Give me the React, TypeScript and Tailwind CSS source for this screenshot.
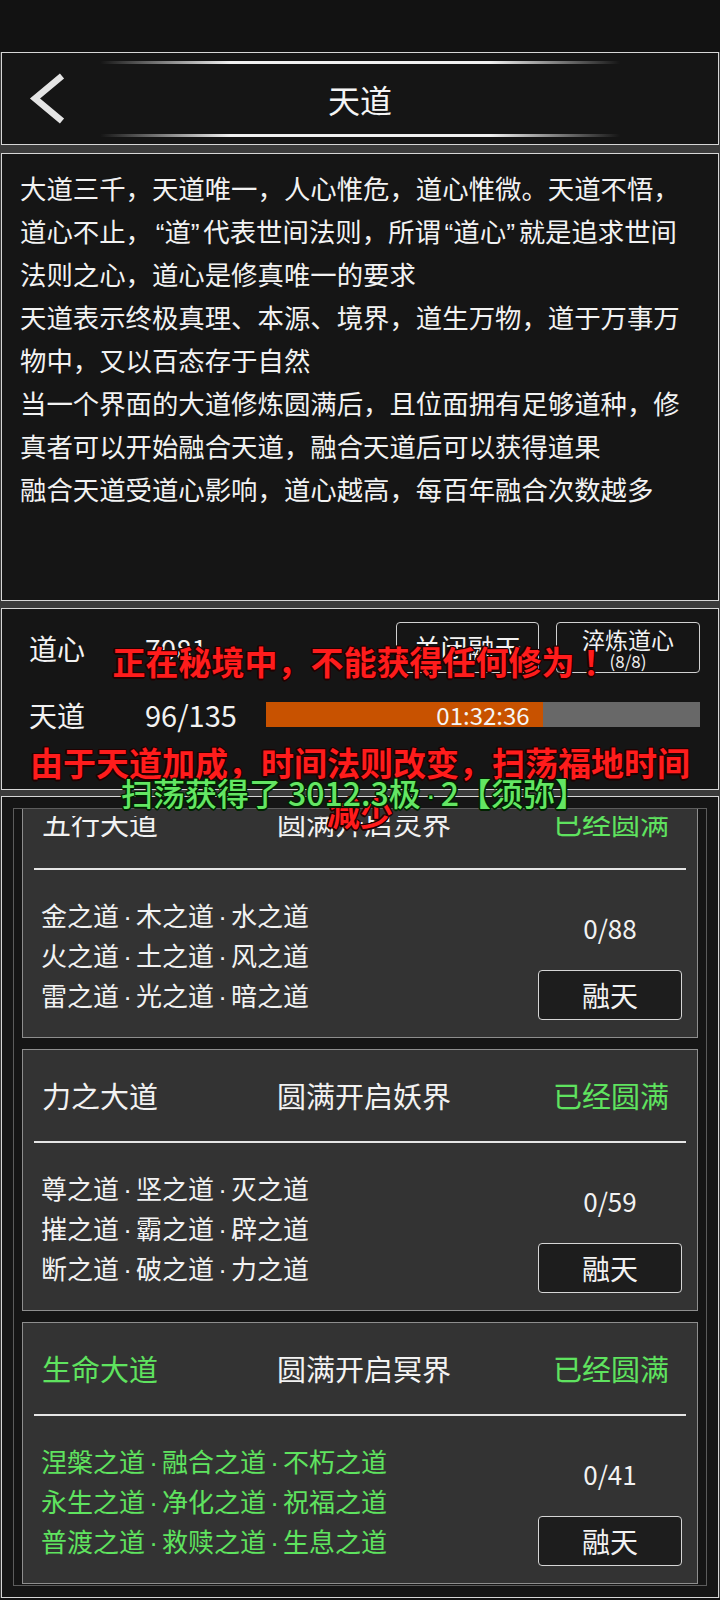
import React from "react";

type CardProps = {
  title: string;
  realm: string;
  lines: string[][];
  count: string;
  green?: boolean;
};

function Dot() {
  return <span className="inline-block w-[17px] text-center font-['Liberation_Sans',sans-serif]">·</span>;
}

function OpenQ() {
  return <span className="inline-block w-[12.5px] text-right font-['Liberation_Sans',sans-serif]">“</span>;
}
function CloseQ() {
  return <span className="inline-block w-[12.5px] text-left font-['Liberation_Sans',sans-serif]">”</span>;
}

function Card({ title, realm, lines, count, green }: CardProps) {
  return (
    <div className="h-[262px] shrink-0 border border-[#8e8e8e] bg-[#333333] flex flex-col">
      <div className="h-[91px] flex items-center text-[29px] leading-none">
        <div className={green ? "w-[254px] pl-[19px] text-[#5fe35f]" : "w-[254px] pl-[19px] text-[#f2f2f2]"}>{title}</div>
        <div className="flex-1 text-[#f2f2f2]">{realm}</div>
        <div className="pr-[28px] text-[#5fe35f]">已经圆满</div>
      </div>
      <div className="mx-[11px] h-[2px] bg-[#e6e6e6]" />
      <div className="flex flex-1">
        <div className={green ? "pl-[18px] pt-[25px] text-[26px] leading-[40px] text-[#5fe35f]" : "pl-[18px] pt-[25px] text-[26px] leading-[40px] text-[#f2f2f2]"}>
          {lines.map((l, i) => (
            <div key={i} className="h-[40px] whitespace-nowrap">
              {l.map((w, j) => (
                <React.Fragment key={j}>
                  {j > 0 && <Dot />}
                  {w}
                </React.Fragment>
              ))}
            </div>
          ))}
        </div>
        <div className="ml-auto mr-[15px] w-[144px] flex flex-col items-center">
          <div className="mt-[40px] h-[36px] leading-[36px] text-[26px] text-[#f2f2f2]">{count}</div>
          <div className="mt-[24px] w-[144px] h-[50px] rounded-[4px] border border-[#d6d6d6] bg-[#1d1d1d] flex items-center justify-center text-[28px] text-[#f2f2f2]">
            融天
          </div>
        </div>
      </div>
    </div>
  );
}

const descLine = "h-[43px] whitespace-nowrap";

export default function App() {
  const progress = 63.8;
  return (
    <div className="relative w-[720px] h-[1600px] overflow-hidden bg-[#121212] font-['Noto_Sans_CJK_SC','Noto_Sans',sans-serif] text-[#f2f2f2]">
      <div className="h-[52px]" />
      <div className="bg-[#3b3b3b] px-px">
        {/* Header */}
        <div className="h-[93px] border border-[#d6d6d6] bg-[#151515] flex flex-col">
          <div className="mt-[8px] mx-auto w-[520px] h-[3px] bg-[linear-gradient(to_right,transparent,#f0f0f0_25%,#f0f0f0_75%,transparent)]" />
          <div className="flex-1 grid grid-cols-[1fr_auto_1fr] items-center">
            <div className="pl-[26px] flex items-center">
              <svg width="38" height="54" viewBox="0 0 38 54">
                <path d="M34 4 L7 26.5 L34 49" fill="none" stroke="#e4e4e4" strokeWidth="6.5" strokeLinejoin="miter" />
              </svg>
            </div>
            <div className="text-[32px] leading-none text-[#f5f5f5]">天道</div>
            <div />
          </div>
          <div className="mb-[7px] mx-auto w-[520px] h-[3px] bg-[linear-gradient(to_right,transparent,#f0f0f0_25%,#f0f0f0_75%,transparent)]" />
        </div>

        {/* Description */}
        <div className="mt-[8px] h-[448px] border border-[#d6d6d6] bg-[#151515] pl-[18px] pt-[12px] text-[26.4px] leading-[43px] text-[#f2f2f2]">
          <div className={descLine}>大道三千，天道唯一，人心惟危，道心惟微。天道不悟，</div>
          <div className={descLine}>
            道心不止，<OpenQ />道<CloseQ />代表世间法则，所谓<OpenQ />道心<CloseQ />就是追求世间
          </div>
          <div className={descLine}>法则之心，道心是修真唯一的要求</div>
          <div className={descLine}>天道表示终极真理、本源、境界，道生万物，道于万事万</div>
          <div className={descLine}>物中，又以百态存于自然</div>
          <div className={descLine}>当一个界面的大道修炼圆满后，且位面拥有足够道种，修</div>
          <div className={descLine}>真者可以开始融合天道，融合天道后可以获得道果</div>
          <div className={descLine}>融合天道受道心影响，道心越高，每百年融合次数越多</div>
        </div>

        {/* Stats */}
        <div className="mt-[7px] h-[182px] border border-[#d6d6d6] bg-[#151515] pt-[13px]">
          <div className="flex items-center h-[51px] pl-[27px] pr-[18px]">
            <div className="w-[116px] text-[28px] leading-none">道心</div>
            <div className="flex-1 text-[28px] leading-none">7081</div>
            <div className="w-[143px] h-[51px] rounded-[4px] border border-[#d0d0d0] flex items-center justify-center text-[27px] leading-none">
              关闭融天
            </div>
            <div className="ml-[17px] w-[144px] h-[51px] rounded-[4px] border border-[#d0d0d0] flex flex-col items-center justify-center">
              <div className="text-[23px] leading-[26px]">淬炼道心</div>
              <div className="text-[17px] leading-[18px]">(8/8)</div>
            </div>
          </div>
          <div className="mt-[21px] flex items-center h-[41px] pl-[27px] pr-[18px]">
            <div className="w-[116px] text-[28px] leading-none">天道</div>
            <div className="w-[121px] text-[29px] leading-none">96/135</div>
            <div className="relative flex-1 h-[25px] bg-[#686868]">
              <div className="h-full bg-[#c85200]" style={{ width: `${progress}%` }} />
              <div className="absolute inset-0 flex items-center justify-center text-[24px] leading-none text-[#f5f5f5]">01:32:36</div>
            </div>
          </div>
        </div>

        {/* List */}
        <div className="mt-[6px] h-[802px] border border-[#d6d6d6] bg-[#151515] p-[11px] flex">
          <div className="relative flex-1 border border-[#5c5c5c] overflow-hidden px-[8px]">
            <div className="mt-[-33px] flex flex-col gap-[11px]">
              <Card
                title="五行天道"
                realm="圆满开启灵界"
                lines={[
                  ["金之道", "木之道", "水之道"],
                  ["火之道", "土之道", "风之道"],
                  ["雷之道", "光之道", "暗之道"],
                ]}
                count="0/88"
              />
              <Card
                title="力之大道"
                realm="圆满开启妖界"
                lines={[
                  ["尊之道", "坚之道", "灭之道"],
                  ["摧之道", "霸之道", "辟之道"],
                  ["断之道", "破之道", "力之道"],
                ]}
                count="0/59"
              />
              <Card
                title="生命大道"
                realm="圆满开启冥界"
                green
                lines={[
                  ["涅槃之道", "融合之道", "不朽之道"],
                  ["永生之道", "净化之道", "祝福之道"],
                  ["普渡之道", "救赎之道", "生息之道"],
                ]}
                count="0/41"
              />
            </div>
            <div className="absolute top-0 left-[8px] right-[8px] h-[7px] bg-[#333333] border-x border-[#8e8e8e]" />
          </div>
        </div>
      </div>

      {/* Toast overlays */}
      <div className="absolute left-0 right-0 top-[636px] text-center text-[33px] leading-[50px] font-bold text-[#ff1c1c] whitespace-nowrap [text-shadow:1.5px_0_0_#200,-1.5px_0_0_#200,0_1.5px_0_#200,0_-1.5px_0_#200,1px_1px_0_#200,-1px_-1px_0_#200,1px_-1px_0_#200,-1px_1px_0_#200]">
        正在秘境中，不能获得任何修为<span className="font-['Noto_Sans_CJK_JP',sans-serif]">！</span>
      </div>
      <div className="absolute left-0 right-0 top-[737px] text-center text-[33px] leading-[50px] font-bold text-[#ff1c1c] whitespace-nowrap [text-shadow:1.5px_0_0_#200,-1.5px_0_0_#200,0_1.5px_0_#200,0_-1.5px_0_#200,1px_1px_0_#200,-1px_-1px_0_#200,1px_-1px_0_#200,-1px_1px_0_#200]">
        由于天道加成，时间法则改变，扫荡福地时间
        <br />
        减少
      </div>
      <div className="absolute left-0 right-[12px] top-[772px] text-center text-[32px] leading-[40px] font-medium text-[#63e663] whitespace-nowrap [text-shadow:1.5px_0_0_#020,-1.5px_0_0_#020,0_1.5px_0_#020,0_-1.5px_0_#020,1px_1px_0_#020,-1px_-1px_0_#020,1px_-1px_0_#020,-1px_1px_0_#020]">
        扫荡获得了 3012.3极<span className="inline-block w-[20px] text-center font-['Liberation_Sans',sans-serif]">·</span>2【须弥】
      </div>
    </div>
  );
}
